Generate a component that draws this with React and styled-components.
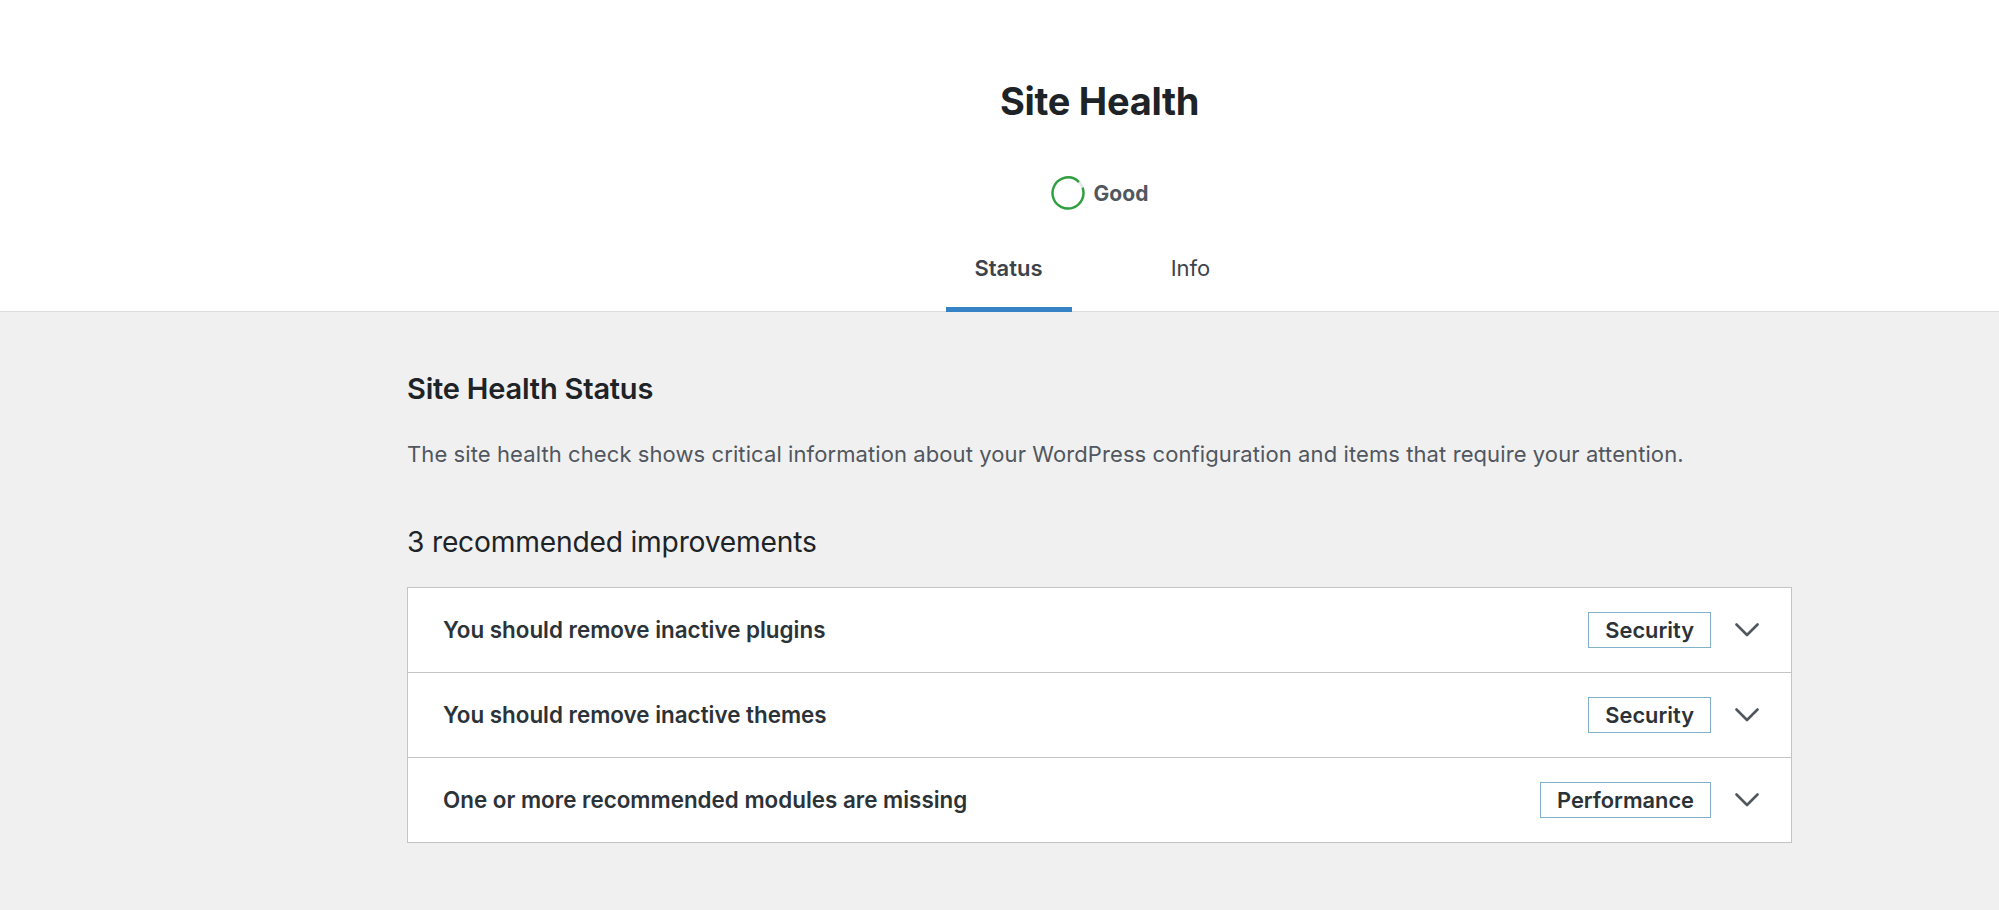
import styled, { createGlobalStyle } from 'styled-components'

const GlobalStyle = createGlobalStyle`
  html, body {
    margin: 0;
    padding: 0;
    background: #f0f0f1;
    font-family: Inter, "Noto Sans", sans-serif;
    color: #1d2327;
  }
  #root {
    min-height: 910px;
  }
`

const issues = [
  { title: 'You should remove inactive plugins', badge: 'Security' },
  { title: 'You should remove inactive themes', badge: 'Security' },
  { title: 'One or more recommended modules are missing', badge: 'Performance' },
]

const Chevron = () => (
  <svg width="24" height="14" viewBox="0 0 24 14" fill="none">
    <path d="M1.5 1.5 L12 12 L22.5 1.5" stroke="#50575e" strokeWidth="2.6" strokeLinecap="round" strokeLinejoin="round" />
  </svg>
)

const GoodRing = () => (
  <svg width="34" height="34" viewBox="0 0 34 34">
    <circle cx="17" cy="17" r="15.5" fill="none" stroke="#e6e6e6" strokeWidth="2.4" />
    <circle
      cx="17"
      cy="17"
      r="15.5"
      fill="none"
      stroke="#2fa040"
      strokeWidth="2.4"
      strokeDasharray="90 98"
      transform="rotate(-20 17 17)"
    />
  </svg>
)

const App = () => {
  return (
    <>
      <GlobalStyle />
      <Header>
        <HeaderInner>
          <Title>Site Health</Title>
          <Score>
            <GoodRing />
            <ScoreLabel>Good</ScoreLabel>
          </Score>
          <Tabs>
            <Tab $active>Status</Tab>
            <Tab>Info</Tab>
          </Tabs>
        </HeaderInner>
      </Header>

      <Body>
        <Content>
          <SectionTitle>Site Health Status</SectionTitle>
          <Description>
            The site health check shows critical information about your WordPress configuration and items that require your attention.
          </Description>
          <IssuesTitle>3 recommended improvements</IssuesTitle>

          <Accordion>
            {issues.map(issue => (
              <Issue key={issue.title}>
                <IssueTitle>{issue.title}</IssueTitle>
                <Badge>{issue.badge}</Badge>
                <Toggle>
                  <Chevron />
                </Toggle>
              </Issue>
            ))}
          </Accordion>
        </Content>
      </Body>
    </>
  )
}

export default App

const Header = styled.header`
  background: #fff;
  border-bottom: 1px solid #dcdcde;
`

const HeaderInner = styled.div`
  margin-left: 200px;
  display: flex;
  flex-direction: column;
  align-items: center;
  padding-top: 77px;
`

const Title = styled.h1`
  margin: 0;
  font-size: 38px;
  line-height: 48px;
  font-weight: 700;
  color: #1d2327;
  letter-spacing: -0.3px;
`

const Score = styled.div`
  display: flex;
  align-items: center;
  gap: 9px;
  margin-top: 51px;
  height: 34px;
`

const ScoreLabel = styled.span`
  font-size: 21px;
  line-height: 24px;
  font-weight: 700;
  color: #50575e;
  padding-top: 2px;
`

const Tabs = styled.nav`
  display: grid;
  grid-template-columns: 126px 126px;
  gap: 56px;
  margin-top: 34px;
`

const Tab = styled.a`
  display: block;
  text-align: center;
  padding: 10px 0 25px;
  font-size: 22px;
  line-height: 28px;
  font-weight: ${p => (p.$active ? 600 : 400)};
  color: #3c434a;
  border-bottom: 5px solid ${p => (p.$active ? '#3582c4' : 'transparent')};
  margin-bottom: -1px;
  cursor: pointer;
`

const Body = styled.main`
  padding-left: 200px;
`

const Content = styled.div`
  width: 1385px;
  margin: 0 auto;
  padding-top: 59px;
`

const SectionTitle = styled.h2`
  margin: 0;
  font-size: 29px;
  line-height: 36px;
  font-weight: 600;
  color: #1d2327;
  letter-spacing: -0.2px;
`

const Description = styled.p`
  margin: 31px 0 0;
  font-size: 22px;
  line-height: 33px;
  letter-spacing: 0.09px;
  color: #50575e;
`

const IssuesTitle = styled.h3`
  margin: 53px 0 0;
  font-size: 28.2px;
  line-height: 36px;
  font-weight: 400;
  color: #1d2327;
  letter-spacing: -0.2px;
`

const Accordion = styled.div`
  margin-top: 27px;
  background: #fff;
  border: 1px solid #c3c4c7;
`

const Issue = styled.div`
  display: flex;
  align-items: center;
  height: 84px;
  padding: 0 32px 0 35px;
  & + & {
    border-top: 1px solid #c3c4c7;
  }
`

const IssueTitle = styled.span`
  flex: 1;
  font-size: 22.4px;
  line-height: 28px;
  font-weight: 600;
  color: #2c3338;
`

const Badge = styled.span`
  display: flex;
  align-items: center;
  height: 34px;
  padding: 0 16px;
  border: 1px solid #80b0ca;
  font-size: 21.8px;
  font-weight: 600;
  color: #2c3338;
`

const Toggle = styled.span`
  display: flex;
  margin-left: 24px;
`
